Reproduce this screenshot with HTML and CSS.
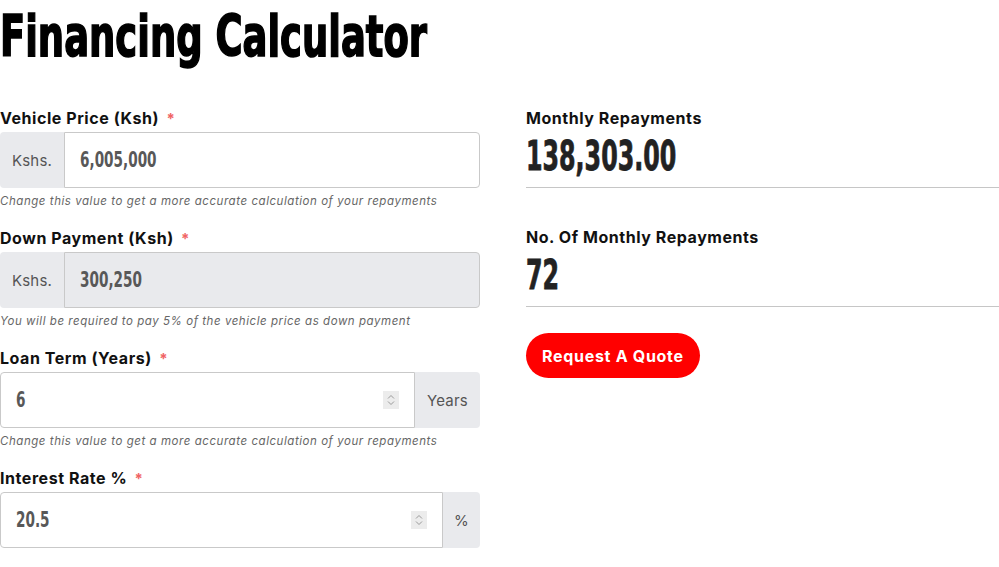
FILE: index.html
```html
<!DOCTYPE html>
<html>
<head>
<meta charset="utf-8">
<link rel="stylesheet" href="styles.css">
</head>
<body>
<div class="page">
  <h1 class="title"><span class="title-text">Financing Calculator</span></h1>
  <div class="cols">
    <div class="form">
      <div class="group">
        <div class="label">Vehicle Price (Ksh) <span class="req">*</span></div>
        <div class="field">
          <span class="addon addon-left">Kshs.</span>
          <div class="box"><input class="value" type="text" value="6,005,000"></div>
        </div>
        <div class="help">Change this value to get a more accurate calculation of your repayments</div>
      </div>
      <div class="group">
        <div class="label">Down Payment (Ksh) <span class="req">*</span></div>
        <div class="field">
          <span class="addon addon-left">Kshs.</span>
          <div class="box disabled"><input class="value" type="text" value="300,250" disabled></div>
        </div>
        <div class="help">You will be required to pay 5% of the vehicle price as down payment</div>
      </div>
      <div class="group">
        <div class="label">Loan Term (Years) <span class="req">*</span></div>
        <div class="field">
          <div class="box box-left"><input class="value" type="text" value="6">
            <span class="spin"><svg viewBox="0 0 16 18" width="16" height="18"><path d="M5 7.5 L8 4.5 L11 7.5 M5 10.5 L8 13.5 L11 10.5" fill="none" stroke="#9a9a9a" stroke-width="1"/></svg></span>
          </div>
          <span class="addon addon-right addon-years">Years</span>
        </div>
        <div class="help">Change this value to get a more accurate calculation of your repayments</div>
      </div>
      <div class="group">
        <div class="label">Interest Rate % <span class="req">*</span></div>
        <div class="field">
          <div class="box box-left"><input class="value" type="text" value="20.5">
            <span class="spin"><svg viewBox="0 0 16 18" width="16" height="18"><path d="M5 7.5 L8 4.5 L11 7.5 M5 10.5 L8 13.5 L11 10.5" fill="none" stroke="#9a9a9a" stroke-width="1"/></svg></span>
          </div>
          <span class="addon addon-right addon-pct">%</span>
        </div>
      </div>
    </div>
    <div class="results">
      <div class="result">
        <div class="label">Monthly Repayments</div>
        <div class="big"><span class="big-text">138,303.00</span></div>
      </div>
      <div class="result">
        <div class="label">No. Of Monthly Repayments</div>
        <div class="big"><span class="big-text">72</span></div>
      </div>
      <div class="actions">
        <button class="btn" type="button">Request A Quote</button>
      </div>
    </div>
  </div>
</div>
</body>
</html>
```

FILE: styles.css
```css
* { box-sizing: border-box; }
html, body { margin: 0; padding: 0; background: #fff; }
body { font-family: "Inter", "Noto Sans", sans-serif; color: #111; overflow: hidden; }
.page { width: 999px; }
.title {
  margin: 0;
  padding-top: 2px;
  height: 100px;
  font-family: "DejaVu Sans", sans-serif;
  font-stretch: condensed;
  font-weight: 700;
  font-size: 57px;
  line-height: 68px;
  color: #000;
}
.title-text {
  display: inline-block;
  transform: scaleX(0.72);
  transform-origin: left center;
  white-space: nowrap;
  -webkit-text-stroke: 1.6px #000;
}
.cols { display: flex; gap: 46px; }
.form { width: 480px; flex: none; }
.results { flex: 1; }
.label {
  font-family: "Inter", "Noto Sans", sans-serif;
  font-weight: 700;
  font-size: 16px;
  letter-spacing: 0.55px;
  line-height: 20px;
  height: 32px;
  padding-top: 8px;
  color: #111;
}
.req { color: #f06464; margin-left: 3px; font-size: 15px; }
.field { display: flex; height: 56px; }
.addon {
  display: flex; align-items: center; justify-content: center;
  background: #e9eaed;
  color: #555;
  font-family: "Inter", "Noto Sans", sans-serif;
  font-size: 15px;
  letter-spacing: 0.2px;
}
.addon-left { width: 64px; border-radius: 4px 0 0 4px; }
.addon-right { border-radius: 0 4px 4px 0; }
.addon-years { width: 65px; }
.addon-pct { width: 37px; }
.box {
  flex: 1; display: flex; align-items: center;
  border: 1px solid #c9c9c9;
  border-radius: 0 4px 4px 0;
  background: #fff;
  padding: 0 15px;
}
.box.disabled { background: #e9eaed; }
.box-left { border-radius: 4px 0 0 4px; }
.value {
  flex: 1; min-width: 0;
  border: 0; outline: 0; background: transparent; padding: 0;
  font-family: "DejaVu Sans", sans-serif;
  font-stretch: condensed;
  font-weight: 700;
  font-size: 21px;
  color: #585858;
  -webkit-text-fill-color: #585858;
  opacity: 1;
  transform: scaleX(0.72);
  transform-origin: left center;
}
.spin { width: 16px; height: 18px; background: #ececec; display: flex; flex: none; }
.help {
  font-family: "Inter", "Noto Sans", sans-serif;
  font-style: italic;
  font-size: 11.5px;
  letter-spacing: 0.55px;
  line-height: 14px;
  height: 32px;
  padding-top: 6px;
  color: #666;
}
.result { border-bottom: 1px solid #c6c6c6; height: 88px; margin-bottom: 31px; }
.big {
  padding-top: 4px;
  font-family: "DejaVu Sans", sans-serif;
  font-stretch: condensed;
  font-weight: 700;
  font-size: 40px;
  line-height: 40px;
  color: #222;
}
.big-text {
  display: inline-block;
  transform: scaleX(0.66);
  transform-origin: left center;
  -webkit-text-stroke: 0.8px #222;
}
.actions { margin-top: -5px; }
.btn {
  height: 45px;
  padding: 0 16px;
  border: 0; border-radius: 23px;
  background: #ff0000;
  color: #fff;
  font-family: "Inter", "Noto Sans", sans-serif;
  font-weight: 700;
  font-size: 16px;
  letter-spacing: 0.7px;
}
```
